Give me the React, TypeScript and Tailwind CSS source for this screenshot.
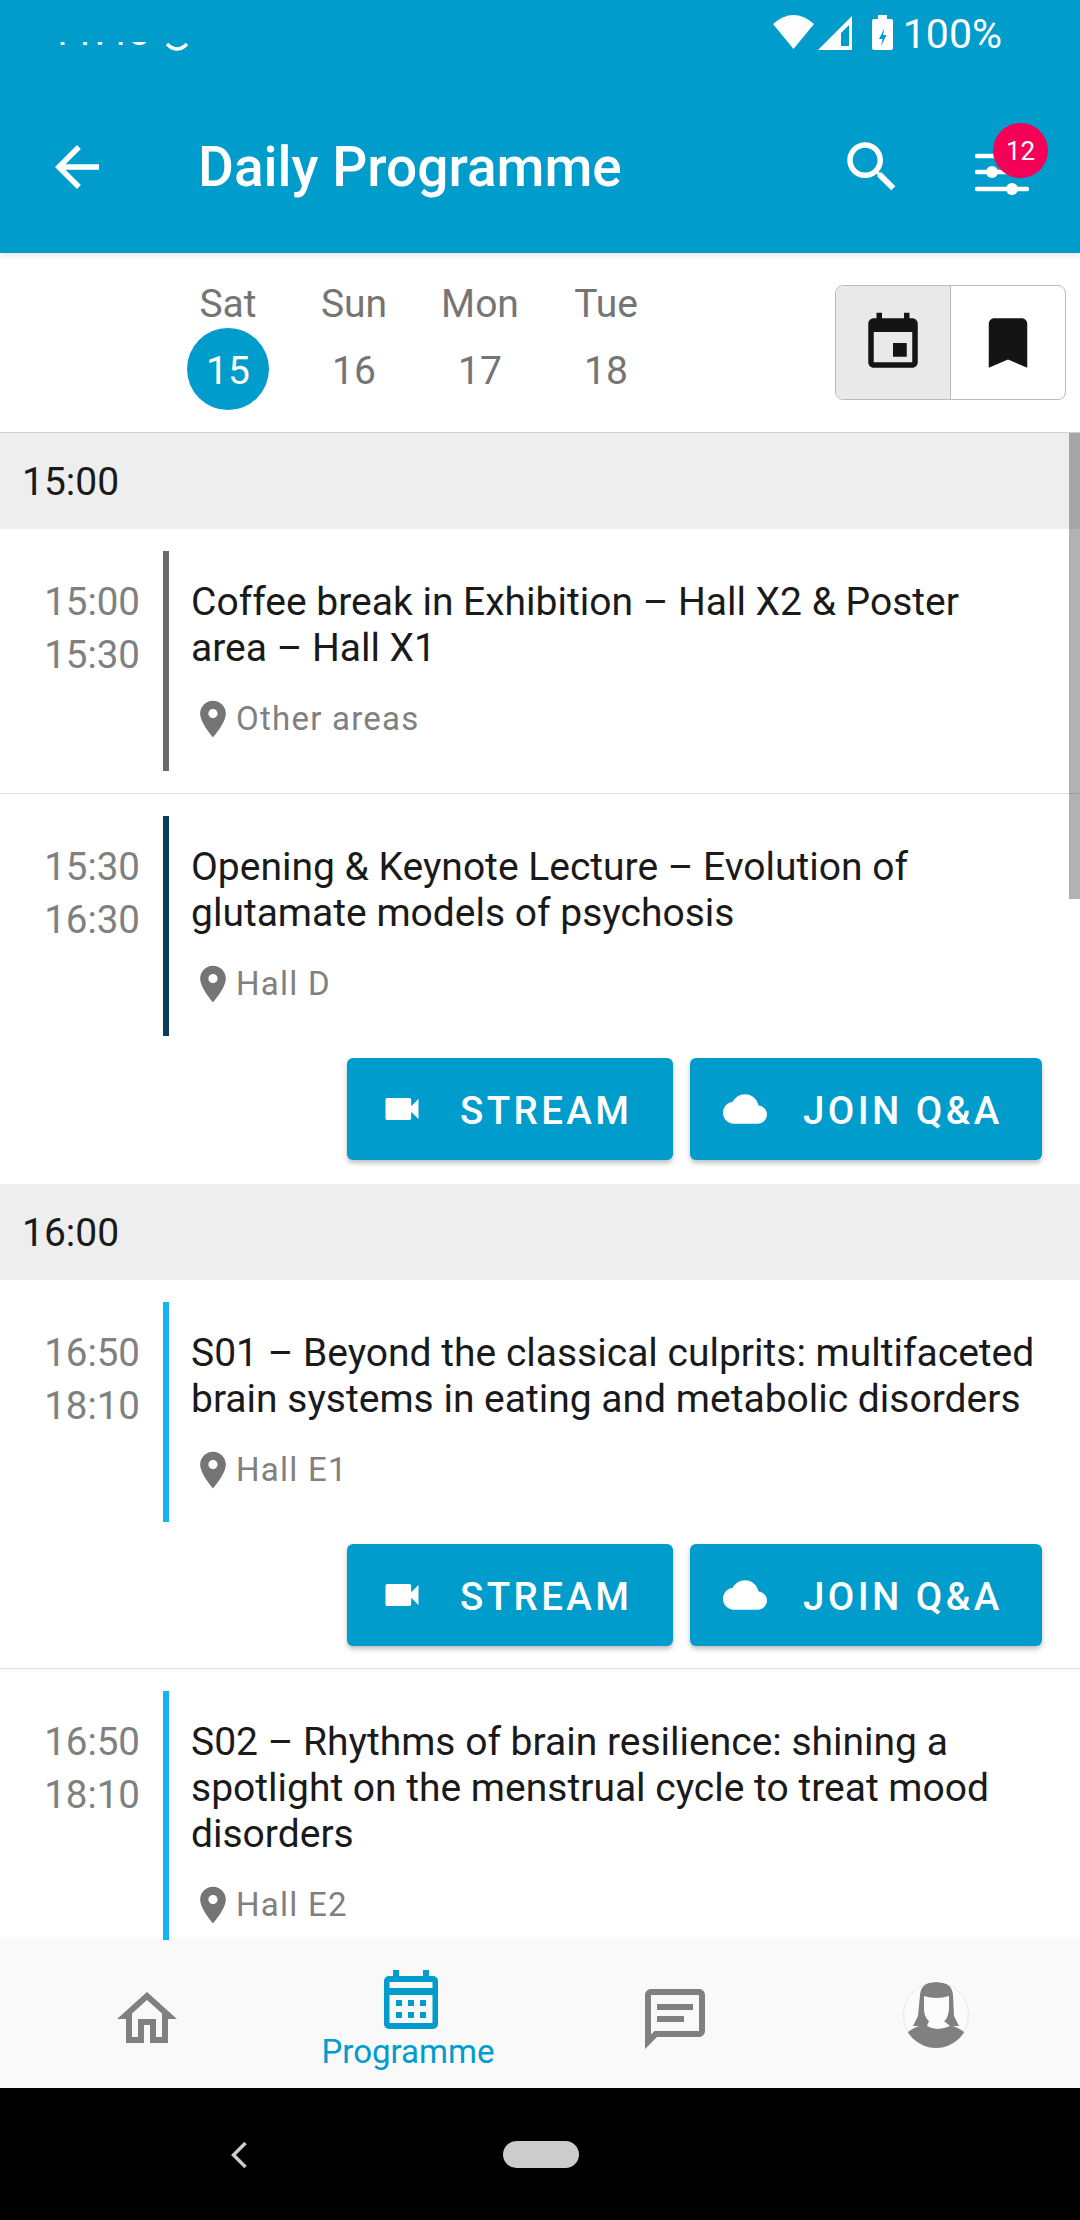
import React from "react";

type Session = {
  start: string;
  end: string;
  title: string;
  place: string;
  accent: string;
  online?: boolean;
  divider?: boolean;
};

type Group = { hour: string; sessions: Session[] };

const groups: Group[] = [
  {
    hour: "15:00",
    sessions: [
      {
        start: "15:00",
        end: "15:30",
        title: "Coffee break in Exhibition – Hall X2 & Poster area – Hall X1",
        place: "Other areas",
        accent: "bg-[#6b6b6b]",
        divider: true,
      },
      {
        start: "15:30",
        end: "16:30",
        title: "Opening & Keynote Lecture – Evolution of glutamate models of psychosis",
        place: "Hall D",
        accent: "bg-[#0b3f57]",
        online: true,
      },
    ],
  },
  {
    hour: "16:00",
    sessions: [
      {
        start: "16:50",
        end: "18:10",
        title: "S01 – Beyond the classical culprits: multifaceted brain systems in eating and metabolic disorders",
        place: "Hall E1",
        accent: "bg-[#14b4f4]",
        online: true,
        divider: true,
      },
      {
        start: "16:50",
        end: "18:10",
        title: "S02 – Rhythms of brain resilience: shining a spotlight on the menstrual cycle to treat mood disorders",
        place: "Hall E2",
        accent: "bg-[#14b4f4]",
      },
    ],
  },
];

const days = [
  { name: "Sat", num: "15", active: true },
  { name: "Sun", num: "16" },
  { name: "Mon", num: "17" },
  { name: "Tue", num: "18" },
];

function Mat({ d, size, className }: { d: string; size: number; className?: string }) {
  return (
    <svg width={size} height={size} viewBox="0 0 24 24" className={`shrink-0 fill-current ${className ?? ""}`}>
      <path d={d} />
    </svg>
  );
}

const ICONS = {
  back: "M20 11H7.83l5.59-5.59L12 4l-8 8 8 8 1.41-1.41L7.83 13H20v-2z",
  search:
    "M15.5 14h-.79l-.28-.27C15.41 12.59 16 11.11 16 9.5 16 5.91 13.09 3 9.5 3S3 5.91 3 9.5 5.91 16 9.5 16c1.61 0 3.09-.59 4.23-1.57l.27.28v.79l5 4.99L20.49 19l-4.99-5zm-6 0C7.01 14 5 11.99 5 9.5S7.01 5 9.5 5 14 7.01 14 9.5 11.99 14 9.5 14z",
  event:
    "M17 12h-5v5h5v-5zM16 1v2H8V1H6v2H5c-1.11 0-1.99.9-1.99 2L3 19c0 1.1.89 2 2 2h14c1.1 0 2-.9 2-2V5c0-1.1-.9-2-2-2h-1V1h-2zm3 18H5V8h14v11z",
  bookmark: "M17 3H7c-1.1 0-1.99.9-1.99 2L5 21l7-3 7 3V5c0-1.1-.9-2-2-2z",
  pin: "M12 2C8.13 2 5 5.13 5 9c0 5.25 7 13 7 13s7-7.75 7-13c0-3.87-3.13-7-7-7zm0 9.5c-1.38 0-2.5-1.12-2.5-2.5s1.12-2.5 2.5-2.5 2.5 1.12 2.5 2.5-1.12 2.5-2.5 2.5z",
  video: "M17 10.5V7c0-.55-.45-1-1-1H4c-.55 0-1 .45-1 1v10c0 .55.45 1 1 1h12c.55 0 1-.45 1-1v-3.5l4 4v-11l-4 4z",
  cloud:
    "M19.35 10.04C18.67 6.59 15.64 4 12 4 9.11 4 6.6 5.64 5.35 8.04 2.34 8.36 0 10.91 0 14c0 3.31 2.69 6 6 6h13c2.76 0 5-2.24 5-5 0-2.64-2.05-4.78-4.65-4.96z",
  home: "M12 5.69l5 4.5V18h-2v-6H9v6H7v-7.81l5-4.5M12 3L2 12h3v8h6v-6h2v6h6v-8h3L12 3z",
  chat: "M20 2H4c-1.1 0-2 .9-2 2v18l4-4h14c1.1 0 2-.9 2-2V4c0-1.1-.9-2-2-2zm0 14H5.17L4 17.17V4h16v12zM6 7h12v2H6zM6 11h9v2H6z",
};

function StatusBar() {
  return (
    <div className="h-[81px] flex items-start justify-between pr-[78px]">
      <div className="flex items-start pl-[50px] pt-[42px]">
        <div className="h-[5px] w-[105px] overflow-hidden">
          <div className="-mt-[30px] text-[40px] leading-[40px] text-white">11:45</div>
        </div>
        <svg width="24" height="10" viewBox="0 0 24 10" className="ml-[10px]" fill="none">
          <path d="M2 2 Q12 12 22 2" stroke="white" strokeWidth="3.5" />
        </svg>
      </div>
      <div className="flex items-start pt-[15px]">
        <svg width="41" height="34" viewBox="0 0 41 34" className="fill-white">
          <path d="M0 9Q20.5-9 41 9L20.5 34Z" />
        </svg>
        <svg width="34" height="34" viewBox="0 0 34 34" className="ml-[4px] mt-[1px] fill-white">
          <path fillRule="evenodd" d="M0 34L34 0V34ZM23 17L31 9V30H23Z" />
        </svg>
        <svg width="21" height="35" viewBox="0 0 21 35" className="ml-[20px] fill-white">
          <path
            fillRule="evenodd"
            d="M6 0h9v4h4a2 2 0 0 1 2 2v27a2 2 0 0 1-2 2H2a2 2 0 0 1-2-2V6a2 2 0 0 1 2-2h4zM12.500 13L7 24h3.500L9 31l5.500-11H11z"
          />
        </svg>
        <span className="ml-[10px] -mt-[3px] text-[41px] leading-[44px] text-white">100%</span>
      </div>
    </div>
  );
}

function Toolbar() {
  return (
    <div className="h-[172px] flex items-center text-white">
      <Mat d={ICONS.back} size={66} className="ml-[44px]" />
      <h1 className="ml-[88px] flex-1 text-[55px] leading-[66px] font-medium">Daily Programme</h1>
      <Mat d={ICONS.search} size={66} />
      <div className="relative ml-[70px] mr-[51px] mt-[12px] h-[46px] w-[54px]">
        <svg width="54" height="46" viewBox="0 0 54 46">
          <g stroke="white" strokeWidth="4.4" strokeLinecap="round">
            <path d="M2 6H52M2 22H52M2 39H52" />
          </g>
          <circle cx="17" cy="22" r="6" fill="white" />
          <circle cx="37" cy="39" r="6" fill="white" />
        </svg>
        <span className="absolute left-[18px] -top-[27px] flex h-[55px] w-[55px] items-center justify-center rounded-full bg-[#f50057] pt-[1px] text-[26px] text-white">
          12
        </span>
      </div>
    </div>
  );
}

function DayStrip() {
  return (
    <div className="h-[180px] flex items-center justify-between border-b border-[#cfcfcf] pl-[165px] pr-[14px] bg-white">
      <div className="flex self-start pt-[28px]">
        {days.map((d) => (
          <div key={d.name} className="flex w-[126px] flex-col items-center">
            <span className="h-[46px] text-[39px] leading-[46px] text-[#757575]">{d.name}</span>
            <span
              className={`mt-[1px] flex h-[82px] w-[82px] items-center justify-center rounded-full pt-[5px] text-[39px] ${
                d.active ? "bg-[#009ccc] text-white" : "text-[#757575]"
              }`}
            >
              {d.num}
            </span>
          </div>
        ))}
      </div>
      <div className="flex h-[115px] w-[231px] overflow-hidden rounded-[8px] border border-[#bbbbbb]">
        <div className="flex w-[115px] items-center justify-center border-r border-[#bbbbbb] bg-[#e9e9e9] text-[#141414]">
          <Mat d={ICONS.event} size={66} />
        </div>
        <div className="flex flex-1 items-center justify-center text-[#141414]">
          <Mat d={ICONS.bookmark} size={66} />
        </div>
      </div>
    </div>
  );
}

function ActionButton({ icon, label, width }: { icon: string; label: string; width: string }) {
  return (
    <button
      className={`flex h-[102px] items-center gap-[36px] rounded-[6px] bg-[#009ccc] pl-[33px] text-[38.5px] font-medium tracking-[3.4px] text-white shadow-[0_3px_5px_rgba(0,0,0,0.25)] ${width}`}
    >
      <Mat d={icon} size={44} />
      <span className="pt-[3px]">{label}</span>
    </button>
  );
}

function SessionRow({ s }: { s: Session }) {
  return (
    <div className={`bg-white pt-[22px] ${s.divider ? "border-b border-[#e0e0e0]" : ""}`}>
      <div className="flex">
        <div className="w-[140px] shrink-0 pt-[24px] text-right text-[38.5px] leading-[53px] text-[#808080]">
          <div>{s.start}</div>
          <div>{s.end}</div>
        </div>
        <div className={`relative z-10 ml-[23px] w-[6px] shrink-0 ${s.accent}`} />
        <div className="ml-[22px] w-[845px] pb-[29px] pt-[28px]">
          <p className="text-[39px] leading-[46px] text-[#1a1a1a]">{s.title}</p>
          <div className="mt-[25px] flex h-[46px] items-center text-[#757575]">
            <Mat d={ICONS.pin} size={44} />
            <span className="ml-[1px] text-[33px] tracking-[1.25px] text-[#808080]">{s.place}</span>
          </div>
        </div>
      </div>
      {s.online ? (
        <div className={`flex justify-end gap-[17px] pr-[38px] pt-[22px] ${s.divider ? "pb-[22px]" : "pb-[24px]"}`}>
          <ActionButton icon={ICONS.video} label="STREAM" width="w-[326px]" />
          <ActionButton icon={ICONS.cloud} label="JOIN Q&A" width="w-[352px]" />
        </div>
      ) : (
        <div className="h-[22px]" />
      )}
    </div>
  );
}

function CalendarTab() {
  return (
    <svg width="54" height="59" viewBox="0 0 54 59" className="ml-[6px] fill-[#009ccc]">
      <path
        fillRule="evenodd"
        d="M9 0h6v6h24V0h6v6h4a5 5 0 0 1 5 5v43a5 5 0 0 1-5 5H5a5 5 0 0 1-5-5V11a5 5 0 0 1 5-5h4zM5.500 12v6h43v-6zM5.500 25v28h43V25z"
      />
      <path d="M12 30h6v6h-6zM24 30h6v6h-6zM36 30h6v6h-6zM12 42h6v6h-6zM24 42h6v6h-6zM36 42h6v6h-6z" />
    </svg>
  );
}

function Avatar() {
  return (
    <svg width="66" height="66" viewBox="0 0 66 66">
      <defs>
        <clipPath id="avatar-disc">
          <circle cx="33" cy="33" r="33" />
        </clipPath>
      </defs>
      <circle cx="33" cy="33" r="32.500" fill="#fbfbfb" stroke="#d8e6e6" strokeWidth="0.8" />
      <g clipPath="url(#avatar-disc)">
        <path d="M17 13Q18 0 33 0Q49 0 50 13L51 34L56 44L10 44L15 34Z" fill="#808080" />
        <path d="M5 50Q11 45 20 43L46 43Q55 45 61 50V66H5Z" fill="#808080" />
        <path d="M21 14Q33 18 46 14V27Q45 37 41 39L47 44Q34 50 24 44L26 39Q21 35 21 27Z" fill="#fbfbfb" />
      </g>
    </svg>
  );
}

function BottomNav() {
  return (
    <nav className="relative -mt-[3px] grid h-[151px] grid-cols-[294px_228px_306px_216px] bg-[#f9f9f9] pr-[36px]">
      <div className="flex justify-center pt-[46px] text-[#808080]">
        <Mat d={ICONS.home} size={72} />
      </div>
      <div className="flex flex-col items-center pt-[33px]">
        <CalendarTab />
        <span className="mt-[3px] text-[33px] leading-[40px] text-[#009ccc]">Programme</span>
      </div>
      <div className="flex justify-center pt-[46px] text-[#808080]">
        <Mat d={ICONS.chat} size={72} />
      </div>
      <div className="flex justify-center pt-[45px]">
        <Avatar />
      </div>
    </nav>
  );
}

function SystemNav() {
  return (
    <div className="relative flex h-[132px] items-start bg-black pl-[231px] pt-[54px]">
      <svg width="16" height="26" viewBox="0 0 16 26" fill="none">
        <path d="M14.500 1L2.500 13L14.500 25" stroke="#cccccc" strokeWidth="3.500" />
      </svg>
      <div className="ml-[256px] -mt-[1px] h-[27px] w-[76px] rounded-full bg-[#cccccc]" />
    </div>
  );
}

export default function App() {
  return (
    <div className="flex h-[2220px] w-[1080px] flex-col overflow-hidden bg-white [font-family:Roboto,sans-serif]">
      <header className="relative z-20 h-[253px] bg-[#009ccc] shadow-[0_2px_6px_rgba(0,0,0,0.12)]">
        <StatusBar />
        <Toolbar />
      </header>
      <DayStrip />
      <main className="relative h-[1507px] overflow-hidden">
        {groups.map((g) => (
          <section key={g.hour}>
            <div className="flex h-[96px] items-center bg-[#eeeeee] pl-[22px] pt-[3px] text-[39px] text-[#1a1a1a]">
              {g.hour}
            </div>
            {g.sessions.map((s) => (
              <SessionRow key={s.title} s={s} />
            ))}
          </section>
        ))}
        <div className="absolute right-0 top-0 h-[466px] w-[11px] bg-black/30" />
      </main>
      <BottomNav />
      <SystemNav />
    </div>
  );
}
